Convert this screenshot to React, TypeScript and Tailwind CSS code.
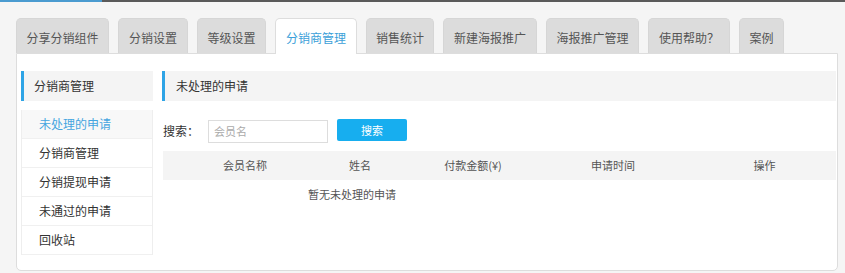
import React from "react";

const tabs: [string, string][] = [
  ["分享分销组件", "w-[93px]"],
  ["分销设置", "w-[70px]"],
  ["等级设置", "w-[69px]"],
  ["分销商管理", "w-[82px]"],
  ["销售统计", "w-[68px]"],
  ["新建海报推广", "w-[94px]"],
  ["海报推广管理", "w-[93px]"],
  ["使用帮助？", "w-[82px]"],
  ["案例", "w-[45px]"],
];
const menu = ["未处理的申请", "分销商管理", "分销提现申请", "未通过的申请", "回收站"];

export default function App() {
  const font = { fontFamily: '"Noto Sans CJK SC", "Noto Sans", sans-serif' };
  return (
    <div className="w-[845px] h-[273px] bg-[#f5f5f5] overflow-hidden" style={font}>
      <div className="flex h-[2px]">
        <div className="w-[102px] bg-[#4a9bd0]" />
        <div className="flex-1 bg-[#5a5a5a]" />
      </div>
      <div className="pl-[16px] pt-[16px] flex gap-[9px] relative z-10">
        {tabs.map(([t, w], i) =>
          i === 3 ? (
            <div
              key={t}
              className={`${w} h-[36px] pt-[3px] flex items-center justify-center text-[12px] text-[#3b9fd9] bg-white border border-b-0 border-[#dddddd] rounded-t-[5px] leading-none`}
            >
              {t}
            </div>
          ) : (
            <div
              key={t}
              className={`${w} h-[35px] pt-[3px] flex items-center justify-center text-[12px] text-[#555] bg-[#dcdcdc] border border-b-0 border-[#d6d6d6] rounded-t-[5px] leading-none`}
            >
              {t}
            </div>
          )
        )}
      </div>
      <div className="ml-[16px] w-[822px] h-[218px] -mt-px bg-white border border-[#dddddd] rounded-b-[5px] pt-[17px] pl-[4px] flex gap-[9px]">
        <div className="w-[132px] shrink-0">
          <div className="h-[30px] bg-[#f4f4f4] border-l-[3px] border-[#2ea4e6] pl-[10px] flex items-center text-[12px] text-[#333]">
            分销商管理
          </div>
          <div className="mt-[9px] border-x border-[#eeeeee]">
            {menu.map((m, i) => (
              <div
                key={m}
                className={`h-[29px] pl-[17px] flex items-center text-[12px] border-b border-[#f0f0f0] ${
                  i === 0 ? "bg-[#f8f8f8] text-[#45a5e0]" : "text-[#333]"
                }`}
              >
                {m}
              </div>
            ))}
          </div>
        </div>
        <div className="flex-1 pr-px">
          <div className="h-[30px] bg-[#f4f4f4] border-l-[3px] border-[#2ea4e6] pl-[11px] flex items-center text-[12px] text-[#333]">
            未处理的申请
          </div>
          <div className="mt-[18px] pl-px flex items-center h-[24px]">
            <span className="text-[12px] text-[#333] w-[45px]">搜索：</span>
            <div className="w-[120px] h-[23px] border border-[#dddddd] pl-[5px] flex items-center text-[11px] text-[#aaaaaa]">
              会员名
            </div>
            <div className="ml-[9px] -mt-[2px] w-[70px] h-[22px] bg-[#17aeef] rounded-[2px] flex items-center justify-center text-[11px] text-white">
              搜索
            </div>
          </div>
          <div className="mt-[8px] ml-px h-[29px] bg-[#f4f4f4] grid grid-cols-[164px_66px_160px_120px_1fr] items-center text-[11px] text-[#555]">
            <div className="text-center">会员名称</div>
            <div className="text-center">姓名</div>
            <div className="text-center">付款金额(¥)</div>
            <div className="text-center">申请时间</div>
            <div className="text-center pl-[20px]">操作</div>
          </div>
          <div className="ml-px h-[28px] flex items-center pl-[145px] text-[11px] text-[#555]">
            暂无未处理的申请
          </div>
        </div>
      </div>
    </div>
  );
}
